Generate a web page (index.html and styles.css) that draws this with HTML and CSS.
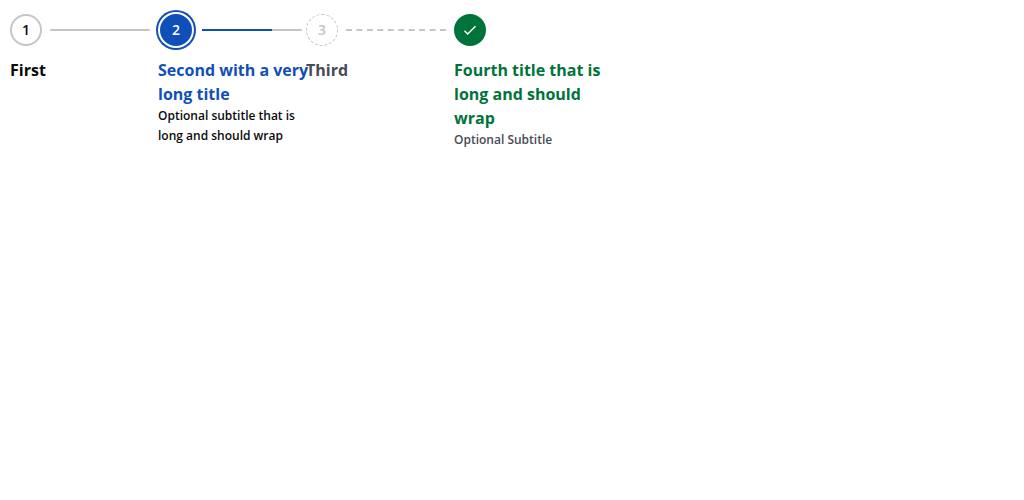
FILE: index.html
```html
<!DOCTYPE html>
<html lang="en">
<head>
<meta charset="utf-8">
<meta name="viewport" content="width=device-width, initial-scale=1">
<title>Stepper</title>
<link rel="stylesheet" href="styles.css">
</head>
<body>
<ol class="stepper">
  <li class="step">
    <div class="track"><span class="marker">1</span><span class="line"></span></div>
    <div class="title">First</div>
  </li>
  <li class="step current" aria-current="step">
    <div class="track"><span class="marker">2</span><span class="line"><span class="progress"></span></span></div>
    <div class="title">Second with a very long title</div>
    <div class="subtitle">Optional subtitle that is long and should wrap</div>
  </li>
  <li class="step disabled">
    <div class="track"><span class="marker">3</span><span class="line"></span></div>
    <div class="title">Third</div>
  </li>
  <li class="step complete">
    <div class="track"><span class="marker"><svg class="check" viewBox="0 0 16 16" aria-label="Completed" role="img"><path d="M2.5 8.7 5.7 12 13.5 4.2"/></svg></span></div>
    <div class="title">Fourth title that is long and should wrap</div>
    <div class="subtitle">Optional Subtitle</div>
  </li>
</ol>
</body>
</html>
```
FILE: styles.css
```css
* {
  box-sizing: border-box;
}

body {
  margin: 0;
  background: #fff;
  color: #0a0a0b;
  font-family: "Open Sans", "Noto Sans", sans-serif;
}

.stepper {
  display: flex;
  list-style: none;
  margin: 0;
  padding: 10px;
}

.step {
  flex: none;
  width: 148px;
}

.track {
  display: flex;
  align-items: center;
  gap: 8px;
  height: 40px;
  margin-bottom: 8px;
}

.marker {
  flex: none;
  display: flex;
  align-items: center;
  justify-content: center;
  width: 32px;
  height: 32px;
  border: 2px solid #c1c6cb;
  border-radius: 50%;
  font-size: 14px;
  font-weight: 600;
  line-height: 20px;
}

.line {
  flex: none;
  width: 100px;
  height: 2px;
  border-radius: 1px;
  background: #c1c6cb;
}

.progress {
  display: block;
  width: 70%;
  height: 2px;
  background: #114fb8;
}

.title {
  width: 152px;
  font-size: 16px;
  font-weight: 700;
  line-height: 24px;
}

.subtitle {
  width: 148px;
  font-size: 12px;
  font-weight: 600;
  line-height: 20px;
}

.current .track {
  gap: 10px;
  padding-left: 2px;
}

.current .marker {
  border-color: #114fb8;
  background: #114fb8;
  box-shadow: 0 0 0 2px #fff, 0 0 0 4px #114fb8;
  color: #fff;
}

.current .title {
  color: #114fb8;
}

.disabled .marker {
  border: 1px dashed #c1c6cb;
  color: #c1c6cb;
}

.disabled .line {
  border-top: 2px dashed #c1c6cb;
  border-radius: 0;
  background: none;
}

.disabled .title,
.complete .subtitle {
  color: #464b55;
}

.complete .marker {
  border-color: #00733b;
  background: #00733b;
}

.complete .title {
  color: #00733b;
}

.check {
  width: 16px;
  height: 16px;
  fill: none;
  stroke: #fff;
  stroke-width: 1.5;
}
```
